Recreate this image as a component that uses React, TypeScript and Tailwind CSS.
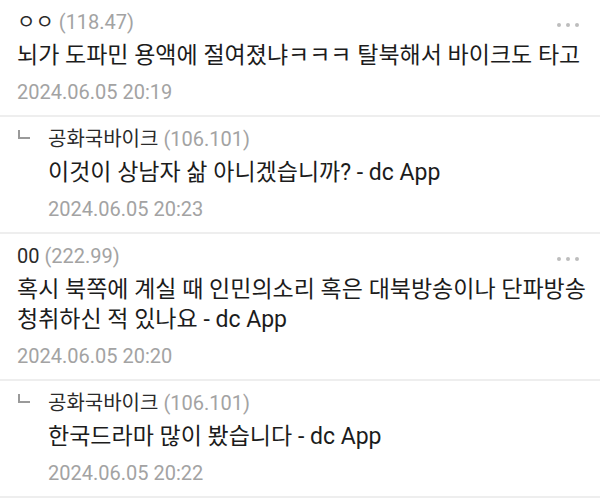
const FONT = "font-['Roboto','Noto_Sans_CJK_KR',sans-serif]";

type Comment = {
  name: string;
  ip: string;
  body: string[];
  date: string;
  reply?: boolean;
};

const COMMENTS: Comment[] = [
  {
    name: 'ㅇㅇ',
    ip: '(118.47)',
    body: ['뇌가 도파민 용액에 절여졌냐ㅋㅋㅋ 탈북해서 바이크도 타고'],
    date: '2024.06.05 20:19',
  },
  {
    name: '공화국바이크',
    ip: '(106.101)',
    body: ['이것이 상남자 삶 아니겠습니까? - dc App'],
    date: '2024.06.05 20:23',
    reply: true,
  },
  {
    name: '00',
    ip: '(222.99)',
    body: ['혹시 북쪽에 계실 때 인민의소리 혹은 대북방송이나 단파방송', '청취하신 적 있나요 - dc App'],
    date: '2024.06.05 20:20',
  },
  {
    name: '공화국바이크',
    ip: '(106.101)',
    body: ['한국드라마 많이 봤습니다 - dc App'],
    date: '2024.06.05 20:22',
    reply: true,
  },
];

function MoreDots() {
  return (
    <div className="flex items-center gap-[5px] pt-[6px] pr-[1px]">
      <span className="w-[4px] h-[4px] rounded-full bg-[#bdbdbd]" />
      <span className="w-[4px] h-[4px] rounded-full bg-[#bdbdbd]" />
      <span className="w-[4px] h-[4px] rounded-full bg-[#bdbdbd]" />
    </div>
  );
}

function CommentRow({ c }: { c: Comment }) {
  return (
    <div className="flex border-b-2 border-[#eeeeee] pt-[8px] pb-[9px] pl-[17px] pr-[20px]">
      {c.reply && (
        <div className="w-[31px] shrink-0 pt-[5px] pl-[1px]">
          <span className="block w-[12px] h-[9px] border-l-2 border-b-2 border-[#9a9a9a]" />
        </div>
      )}
      <div className="flex-1 min-w-0">
        <div className="flex items-center justify-between h-[28px]">
          <div className="text-[20px] leading-[28px] whitespace-nowrap">
            <span className="text-[#2a2a2a]">{c.name}</span>{' '}
            <span className="text-[#a3a3a3]">{c.ip}</span>
          </div>
          {!c.reply && <MoreDots />}
        </div>
        <div className="mt-[5px] text-[23px] leading-[30px] text-[#1c1c1c] whitespace-nowrap">
          {c.body.map((line) => (
            <div key={line}>{line}</div>
          ))}
        </div>
        <div className="mt-[7px] text-[20px] leading-[28px] text-[#a3a3a3]">{c.date}</div>
      </div>
    </div>
  );
}

export default function App() {
  return (
    <div className={`w-[600px] h-[499px] overflow-hidden bg-white ${FONT}`}>
      {COMMENTS.map((c, i) => (
        <CommentRow key={i} c={c} />
      ))}
    </div>
  );
}
